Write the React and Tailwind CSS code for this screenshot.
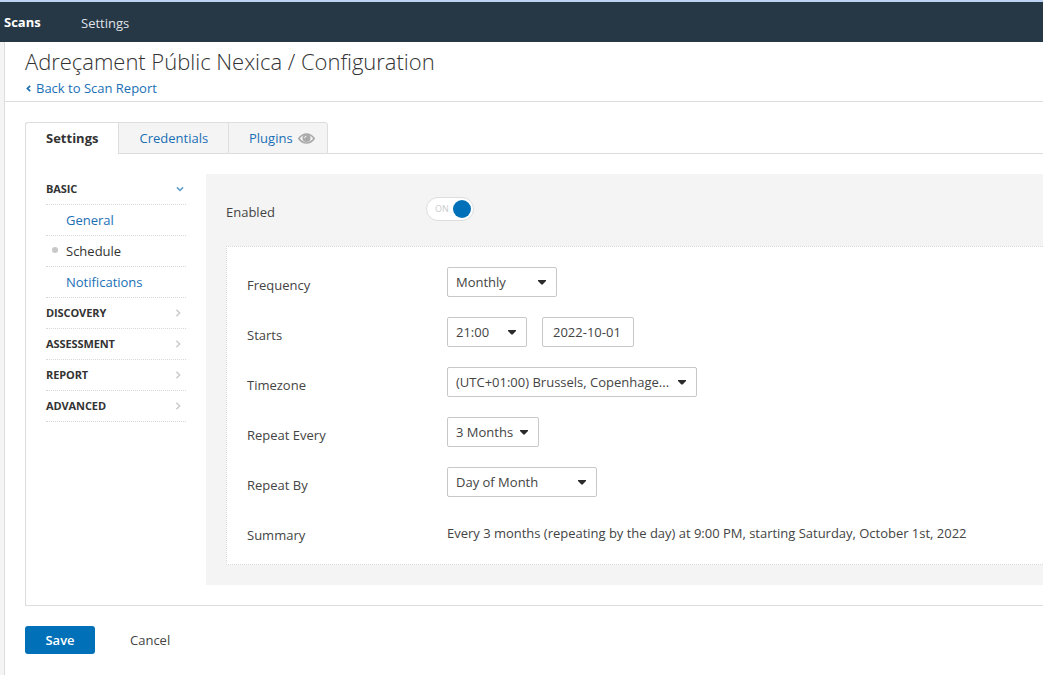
function Caret() {
  return (
    <svg className="h-[5px] w-2 shrink-0" viewBox="0 0 8 5" aria-hidden="true">
      <path d="M0 0h8v1L4.6 4.6h-1.2L0 1z" fill="#2b2b2b" />
    </svg>
  );
}

function Chevron({ open }) {
  return open ? (
    <svg className="mr-[2px] h-2 w-2" viewBox="0 0 8 8" fill="none" aria-hidden="true">
      <path d="M0.9 2.4L4 5.4L7.1 2.4" stroke="#5f9fc9" strokeWidth="1.5" />
    </svg>
  ) : (
    <svg className="mr-1 h-2 w-2" viewBox="0 0 8 8" fill="none" aria-hidden="true">
      <path d="M2.4 0.7L5.6 4L2.4 7.3" stroke="#cccccc" strokeWidth="1.6" />
    </svg>
  );
}

function Eye() {
  return (
    <svg className="h-[11px] w-[17px]" viewBox="0 0 17 11" aria-hidden="true">
      <path d="M0.8 5.5Q4 1 8.5 1T16.2 5.5Q13 10 8.5 10T0.8 5.5z" fill="none" stroke="#aaaaaa" strokeWidth="1.7" />
      <circle cx="8.5" cy="5.1" r="4" fill="#aaaaaa" />
      <path d="M6.6 5.2Q6.6 3.2 8.5 3.1" fill="none" stroke="#f4f4f4" strokeWidth="1" />
    </svg>
  );
}

function Select({ className, children }) {
  return (
    <button className={`flex h-[30px] items-center justify-between rounded-[2px] border border-[#c8c8c8] bg-white pr-[10px] pl-2 ${className}`}>
      <span className="leading-5 whitespace-nowrap">{children}</span>
      <Caret />
    </button>
  );
}

function Row({ label, children }) {
  return (
    <div className="flex h-[50px] items-start">
      <div className="w-[200px] shrink-0 pt-2 leading-5">{label}</div>
      {children}
    </div>
  );
}

function Section({ title, open }) {
  return (
    <div className="flex h-[31px] items-center justify-between border-b border-dotted border-[#d8d8d8] text-[11px] font-bold tracking-[-0.1px] text-[#333333]">
      <span>{title}</span>
      <Chevron open={open} />
    </div>
  );
}

function Item({ active, children }) {
  return (
    <div className="flex h-[31px] items-center border-b border-dotted border-[#d8d8d8]">
      <span className="flex w-5 pb-[3px] pl-[6px]">
        {active && <span className="size-[6px] rounded-full bg-[#c8c8c8]" />}
      </span>
      <a className={active ? "leading-5 text-[#333333]" : "leading-5 text-[#1a6fb5]"}>{children}</a>
    </div>
  );
}

export default function App() {
  return (
    <div className="flex h-[675px] w-[1043px] flex-col overflow-hidden bg-white font-['Open_Sans',sans-serif] text-[13px] text-[#444444]">
      <header className="flex h-[42px] shrink-0 items-center border-t-2 border-[#bdd3f4] bg-[#263746] pl-1 leading-5 text-[#e0e4e8]">
        <a className="w-[77px] pb-px font-bold text-white">Scans</a>
        <a className="pt-px">Settings</a>
      </header>
      <div className="flex flex-1">
        <div className="w-[5px] shrink-0 border-r border-[#dddddd] bg-[#f4f4f4]" />
        <main className="flex min-w-0 flex-1 flex-col">
          <div className="h-[60px] border-b border-[#dddddd] pl-5">
            <h1 className="pt-[5px] pb-px text-[22px] leading-7 font-light tracking-[-0.025px] whitespace-nowrap text-[#333333]">Adreçament Públic Nexica / Configuration</h1>
            <a className="flex items-center pt-[2px] pl-px leading-5 text-[#1a6fb5]">
              <svg className="mt-px mr-[5px] h-[7px] w-[5px]" viewBox="0 0 5 7" fill="none" aria-hidden="true">
                <path d="M4.2 0.8L1.4 3.5L4.2 6.2" stroke="#1a6fb5" strokeWidth="1.7" />
              </svg>
              Back to Scan Report
            </a>
          </div>
          <div className="pt-5 pl-5">
            <nav className="flex h-8">
              <a className="z-10 flex w-[93px] items-center rounded-tl-[3px] border-t border-l border-[#dddddd] bg-white pl-5 font-bold text-[#333333]">Settings</a>
              <a className="flex w-[110px] items-center border border-r-0 border-[#dddddd] bg-[#f4f4f4] pt-px pl-[20.5px] text-[#1a6fb5]">Credentials</a>
              <a className="flex w-[100px] items-center gap-[5px] rounded-tr-[3px] border border-[#dddddd] bg-[#f4f4f4] pl-5 text-[#1a6fb5]">
                <span className="leading-5">Plugins</span> <Eye />
              </a>
              <div className="flex-1 border-b border-[#dddddd]" />
            </nav>
            <section className="flex h-[452px] border-b border-l border-[#dddddd] pl-5">
              <aside className="w-[140px] shrink-0 pt-5">
                <Section title="BASIC" open />
                <Item>General</Item>
                <Item active>Schedule</Item>
                <Item>Notifications</Item>
                <Section title="DISCOVERY" />
                <Section title="ASSESSMENT" />
                <Section title="REPORT" />
                <Section title="ADVANCED" />
              </aside>
              <div className="mt-5 ml-5 flex h-[411px] flex-1 flex-col bg-[#f4f4f4] pl-5">
                <div className="flex h-[72px] items-start">
                  <div className="w-[200px] pt-7 leading-5">Enabled</div>
                  <div className="mt-[23px] flex h-6 w-12 items-center justify-between rounded-full border border-[#dddddd] bg-white pr-[2px] pl-2">
                    <span className="text-[9px] text-[#cccccc]">ON</span>
                    <span className="size-[18px] rounded-full bg-[#0071b9]" />
                  </div>
                </div>
                <div className="h-[319px] border border-r-0 border-dotted border-[#d8d8d8] bg-white pt-5 pl-5">
                  <Row label="Frequency"><Select className="w-[110px]">Monthly</Select></Row>
                  <Row label="Starts">
                    <Select className="w-20">21:00</Select>
                    <div className="ml-[15px] flex h-[30px] w-[92px] items-center rounded-[2px] border border-[#c8c8c8] pl-[10px] leading-5">2022-10-01</div>
                  </Row>
                  <Row label="Timezone"><Select className="w-[250px]">(UTC+01:00) Brussels, Copenhage...</Select></Row>
                  <Row label="Repeat Every"><Select className="w-[92px]">3 Months</Select></Row>
                  <Row label="Repeat By"><Select className="w-[150px]">Day of Month</Select></Row>
                  <Row label="Summary">
                    <p className="pt-[6px] leading-5 tracking-[-0.015px] whitespace-nowrap">Every 3 months (repeating by the day) at 9:00 PM, starting Saturday, October 1st, 2022</p>
                  </Row>
                </div>
              </div>
            </section>
            <div className="flex items-center pt-5">
              <button className="h-7 w-[70px] rounded-[3px] bg-[#0071b9] pt-px font-semibold text-white">Save</button>
              <button className="pt-px pl-[35px]">Cancel</button>
            </div>
          </div>
        </main>
      </div>
    </div>
  );
}
